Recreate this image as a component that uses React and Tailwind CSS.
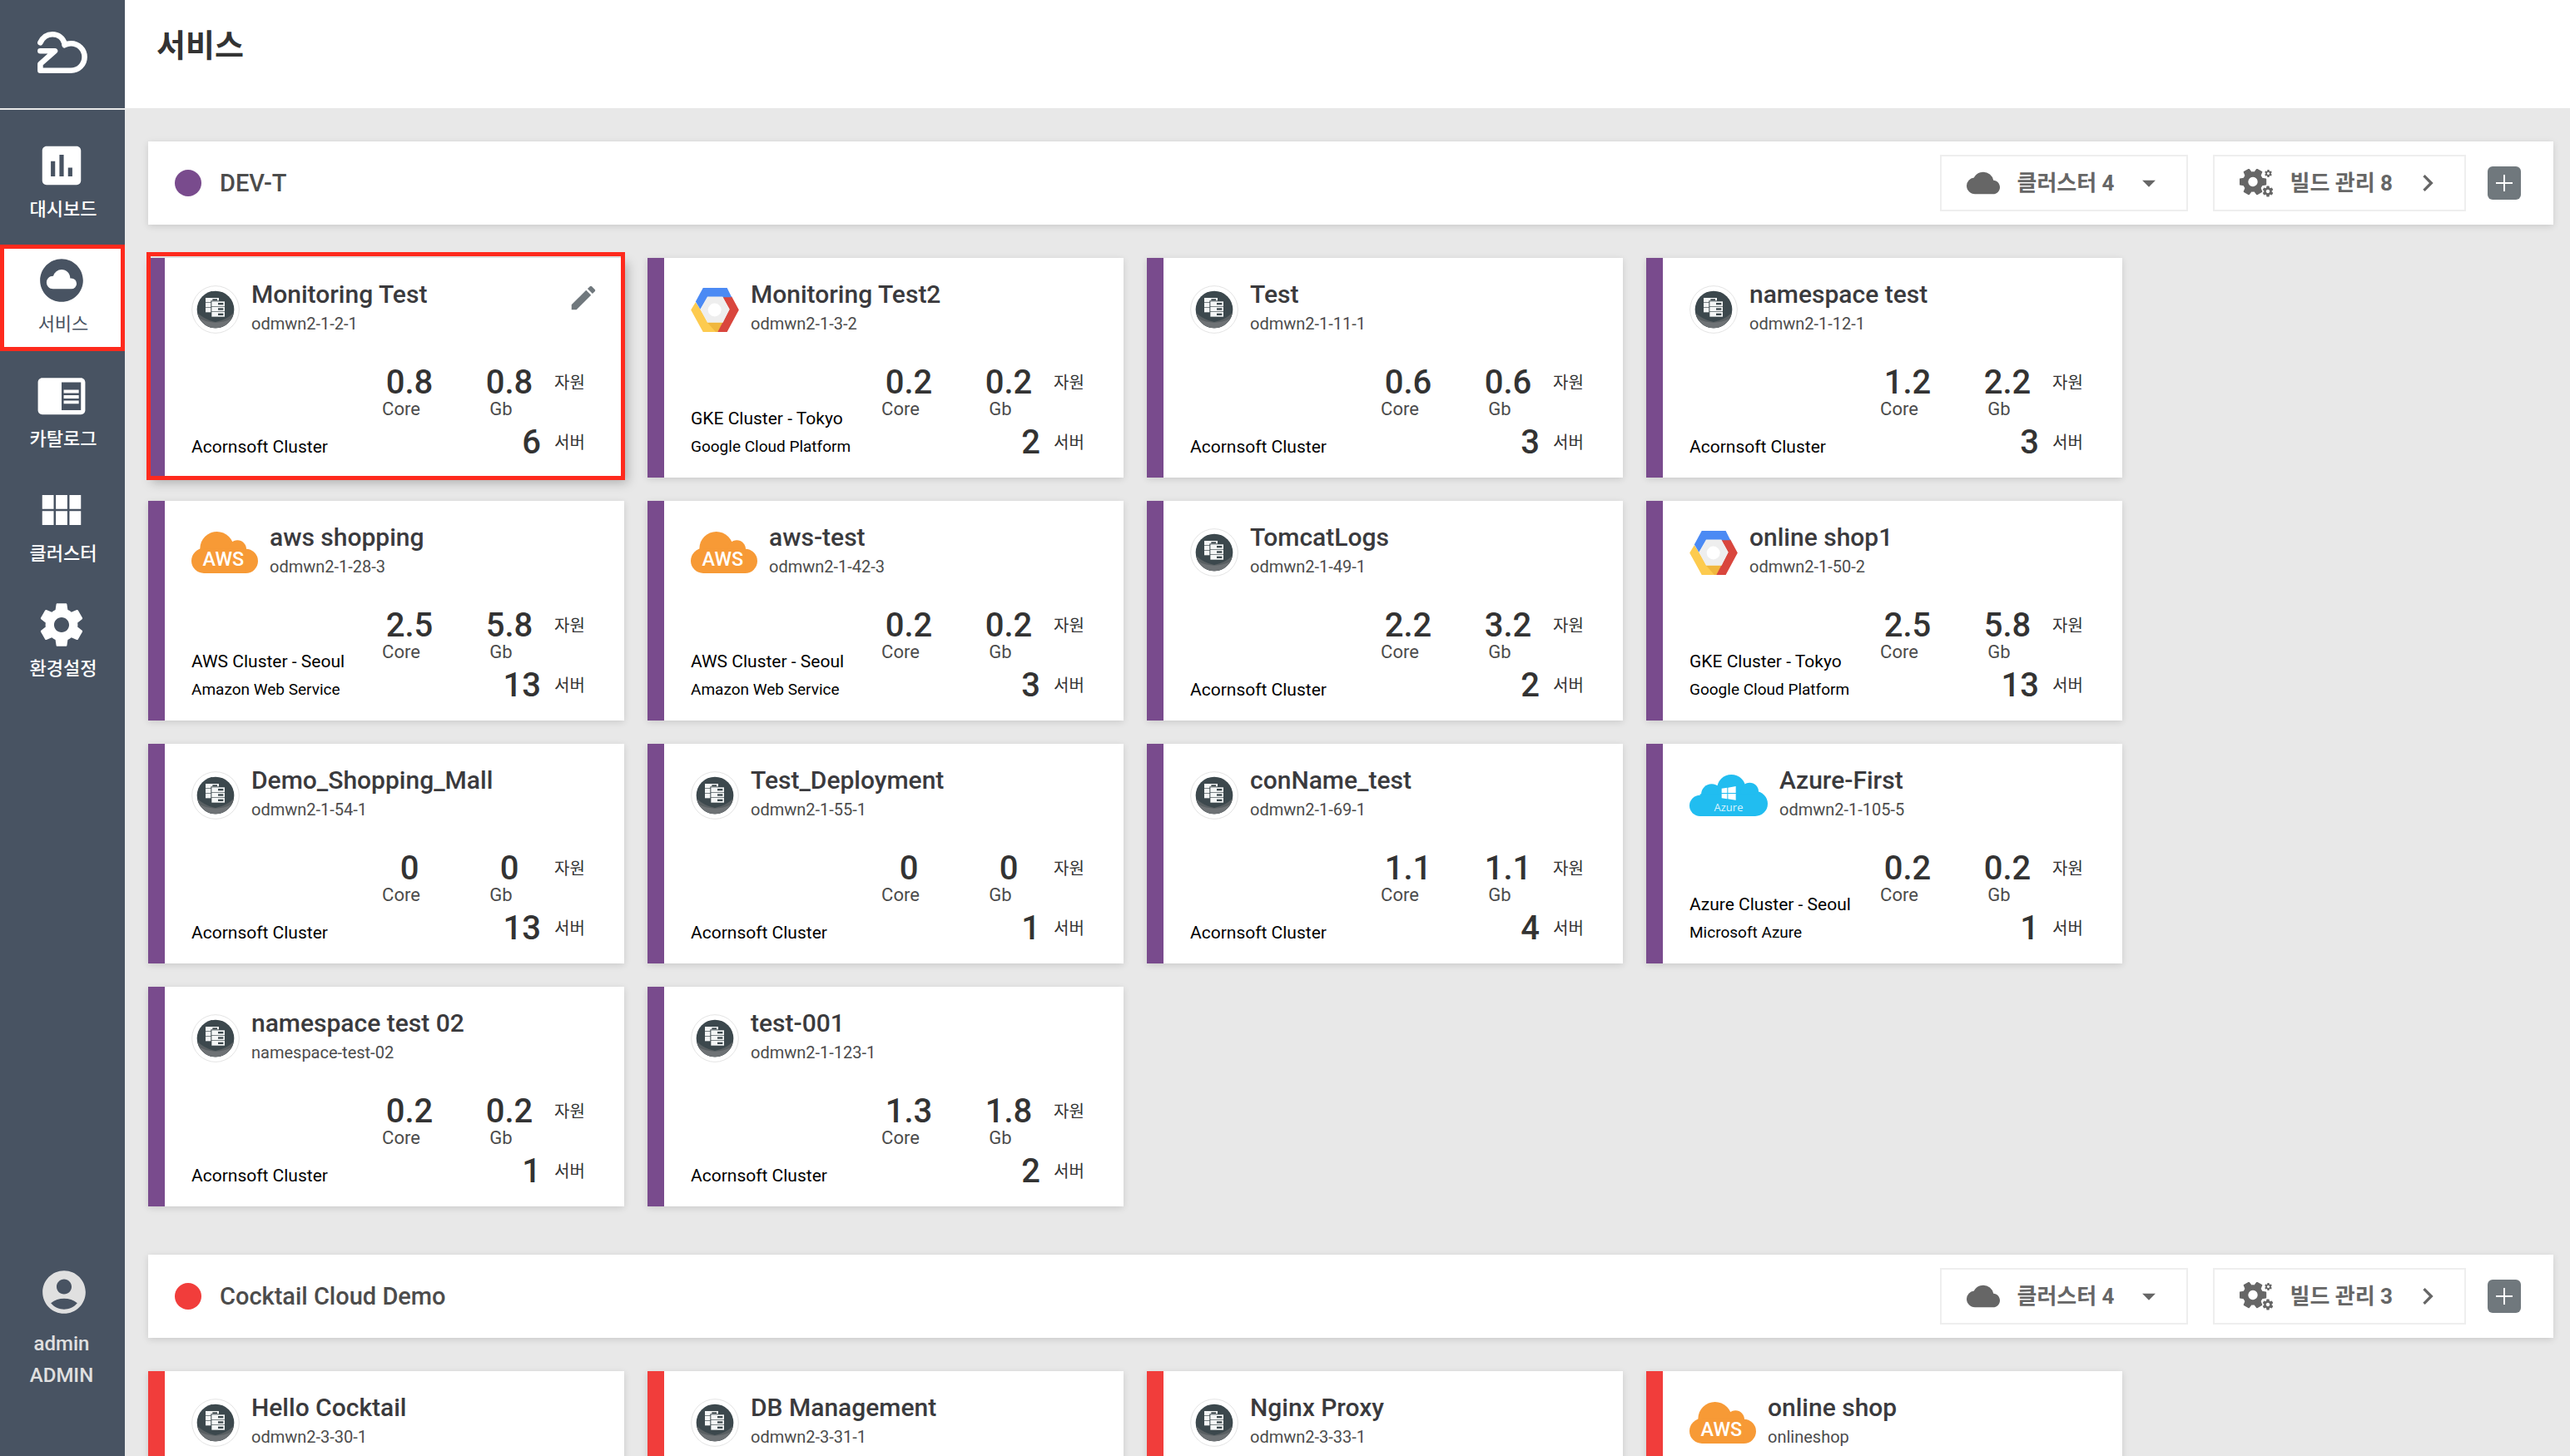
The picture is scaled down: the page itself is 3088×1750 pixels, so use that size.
import React from "react";
import {
  MdInsertChart,
  MdCloudCircle,
  MdChromeReaderMode,
  MdViewModule,
  MdAccountCircle,
  MdCloud,
  MdArrowDropDown,
  MdChevronRight,
  MdEdit,
} from "react-icons/md";

const GEAR =
  "M19.43 12.98c.04-.32.07-.64.07-.98s-.03-.66-.07-.98l2.11-1.65c.19-.15.24-.42.12-.64l-2-3.46c-.12-.22-.39-.3-.61-.22l-2.49 1c-.52-.4-1.08-.73-1.69-.98l-.38-2.65C14.46 2.18 14.25 2 14 2h-4c-.25 0-.46.18-.49.42l-.38 2.65c-.61.25-1.17.59-1.69.98l-2.49-1c-.23-.09-.49 0-.61.22l-2 3.46c-.13.22-.07.49.12.64l2.11 1.65c-.04.32-.07.65-.07.98s.03.66.07.98l-2.11 1.65c-.19.15-.24.42-.12.64l2 3.46c.12.22.39.3.61.22l2.49-1c.52.4 1.08.73 1.69.98l.38 2.65c.03.24.24.42.49.42h4c.25 0 .46-.18.49-.42l.38-2.65c.61-.25 1.17-.59 1.69-.98l2.49 1c.23.09.49 0 .61-.22l2-3.46c.12-.22.07-.49-.12-.64l-2.11-1.65zM12 15.5c-1.93 0-3.5-1.57-3.5-3.5s1.57-3.5 3.5-3.5 3.5 1.57 3.5 3.5-1.57 3.5-3.5 3.5z";

function GearIcon({ className }) {
  return (
    <svg viewBox="0 0 24 24" fill="currentColor" className={className} aria-hidden="true">
      <path d={GEAR} />
    </svg>
  );
}

function GearsIcon({ className }) {
  return (
    <svg viewBox="0 0 40 34" fill="currentColor" className={className} aria-hidden="true">
      <g transform="translate(16 15.5) rotate(30) scale(1.62) translate(-12 -12)">
        <path d={GEAR} />
      </g>
      <g transform="translate(34.5 5.5) scale(0.44) translate(-12 -12)">
        <path d={GEAR} />
      </g>
      <g transform="translate(34 27) scale(0.64) translate(-12 -12)">
        <path d={GEAR} />
      </g>
    </svg>
  );
}

function Logo() {
  return (
    <svg
      viewBox="0 0 60 50"
      className="h-[50px] w-[60px]"
      fill="none"
      stroke="#fff"
      strokeWidth="6.6"
      strokeLinecap="round"
      strokeLinejoin="round"
      aria-hidden="true"
    >
      <path d="M3.4 13.2C6.4 7 11.600 3.300 18 3.300c7 0 12.800 4.300 14.600 11.200" />
      <path d="M32.600 16.200C35 14.900 37.400 14.300 40.200 14.300c9.200 0 16.400 7.200 16.400 16.200s-7.200 16.200-16.400 16.200H3.400v-7.800L21 23.200H3.400" />
    </svg>
  );
}

function ServerLogo() {
  const rows = [0, 1, 2];
  return (
    <svg viewBox="0 0 174 174" className="size-[58px] shrink-0" role="img" aria-label="Server">
      <circle cx="87" cy="87" r="85" fill="#fff" stroke="#e4e4e4" strokeWidth="3" />
      <circle cx="87" cy="87" r="67" fill="#3c484d" />
      <path d="M21 98 Q48 124 87 132 Q126 124 153 98 A67 67 0 0 1 21 98Z" fill="#595f62" />
      <path d="M29 120 Q58 134 87 134 Q116 134 145 120 A67 67 0 0 1 29 120Z" fill="#6e7275" />
      {rows.map((r) => (
        <g key={r} transform={`translate(0 ${r * 18})`}>
          <rect x="51" y="45" width="48" height="16" fill="#f4f6f6" />
          <rect x="76" y="49" width="17" height="5" fill="#3c484d" />
        </g>
      ))}
      <rect x="70" y="55" width="54" height="60" fill="#3c484d" />
      {rows.map((r) => (
        <g key={r} transform={`translate(0 ${r * 19})`}>
          <rect x="73" y="58" width="47" height="17" fill="#f4f6f6" />
          <rect x="96" y="63" width="19" height="7" fill="#3c484d" />
        </g>
      ))}
    </svg>
  );
}

function GcpLogo() {
  return (
    <svg viewBox="0 0 174 160" className="h-[53px] w-[58px] shrink-0" role="img" aria-label="Google Cloud Platform">
      <path d="M17 52 L0 80 L44 160 H98 L119 124 H60 L34 78Z" fill="#fdcb4f" />
      <path d="M60 126 H117 L97 160 H90Z" fill="#f0b73e" />
      <path d="M114 32 H148 L174 80 L131 160 H97 L140 78Z" fill="#d9463d" />
      <path d="M44 0 H131 L148 34 H60 L34 78 L17 50Z" fill="#4b8af4" />
      <path d="M60 32 H115 L140 78 L116 126 H60 L34 78Z" fill="#eeeeee" />
      <circle cx="86" cy="80" r="24" fill="#fff" />
    </svg>
  );
}

function AwsLogo() {
  return (
    <svg viewBox="0 0 240 150" className="h-[50px] w-[80px] shrink-0" role="img" aria-label="AWS">
      <g fill="#f79a36">
        <circle cx="45" cy="105" r="45" />
        <circle cx="92" cy="61" r="61" />
        <circle cx="166" cy="63" r="32" />
        <circle cx="196" cy="106" r="44" />
        <rect x="45" y="62" width="151" height="88" />
      </g>
      <text x="115" y="123" textAnchor="middle" fill="#fff" fontFamily="Roboto, sans-serif" fontWeight="500" fontSize="70">
        AWS
      </text>
    </svg>
  );
}

function AzureLogo() {
  return (
    <svg viewBox="0 0 282 150" className="h-[50px] w-[94px] shrink-0" role="img" aria-label="Azure">
      <g fill="#21bdf0">
        <circle cx="38" cy="112" r="38" />
        <circle cx="80" cy="72" r="38" />
        <circle cx="151" cy="52" r="52" />
        <circle cx="217" cy="61" r="32" />
        <circle cx="237" cy="105" r="45" />
        <rect x="38" y="70" width="199" height="80" />
      </g>
      <g fill="#fff">
        <path d="M116 50 L136 47 V66 H116Z" />
        <path d="M139 47 L167 42 V66 H139Z" />
        <path d="M116 69 H136 V88 L116 85Z" />
        <path d="M139 69 H167 V92 L139 88Z" />
      </g>
      <text x="141" y="131" textAnchor="middle" fill="#d9f3fd" fontFamily="Open Sans, sans-serif" fontSize="39">
        Azure
      </text>
    </svg>
  );
}

const LOGOS = { server: ServerLogo, gcp: GcpLogo, aws: AwsLogo, azure: AzureLogo };

const ACORN = ["Acornsoft Cluster"];
const GKE = ["GKE Cluster - Tokyo", "Google Cloud Platform"];
const AWS = ["AWS Cluster - Seoul", "Amazon Web Service"];
const AZURE = ["Azure Cluster - Seoul", "Microsoft Azure"];

const card = (logo, name, id, cluster, core, gb, servers) => ({ logo, name, id, cluster, core, gb, servers });

const GROUPS = [
  {
    name: "DEV-T",
    dot: "bg-[#794b8d]",
    border: "border-[#794b8d]",
    clusters: 4,
    builds: 8,
    cards: [
      { ...card("server", "Monitoring Test", "odmwn2-1-2-1", ACORN, "0.8", "0.8", "6"), selected: true },
      card("gcp", "Monitoring Test2", "odmwn2-1-3-2", GKE, "0.2", "0.2", "2"),
      card("server", "Test", "odmwn2-1-11-1", ACORN, "0.6", "0.6", "3"),
      card("server", "namespace test", "odmwn2-1-12-1", ACORN, "1.2", "2.2", "3"),
      card("aws", "aws shopping", "odmwn2-1-28-3", AWS, "2.5", "5.8", "13"),
      card("aws", "aws-test", "odmwn2-1-42-3", AWS, "0.2", "0.2", "3"),
      card("server", "TomcatLogs", "odmwn2-1-49-1", ACORN, "2.2", "3.2", "2"),
      card("gcp", "online shop1", "odmwn2-1-50-2", GKE, "2.5", "5.8", "13"),
      card("server", "Demo_Shopping_Mall", "odmwn2-1-54-1", ACORN, "0", "0", "13"),
      card("server", "Test_Deployment", "odmwn2-1-55-1", ACORN, "0", "0", "1"),
      card("server", "conName_test", "odmwn2-1-69-1", ACORN, "1.1", "1.1", "4"),
      card("azure", "Azure-First", "odmwn2-1-105-5", AZURE, "0.2", "0.2", "1"),
      card("server", "namespace test 02", "namespace-test-02", ACORN, "0.2", "0.2", "1"),
      card("server", "test-001", "odmwn2-1-123-1", ACORN, "1.3", "1.8", "2"),
    ],
  },
  {
    name: "Cocktail Cloud Demo",
    dot: "bg-[#f13d3b]",
    border: "border-[#f13d3b]",
    clusters: 4,
    builds: 3,
    cards: [
      card("server", "Hello Cocktail", "odmwn2-3-30-1"),
      card("server", "DB Management", "odmwn2-3-31-1"),
      card("server", "Nginx Proxy", "odmwn2-3-33-1"),
      card("aws", "online shop", "onlineshop"),
    ],
  },
];

const NAV = [
  { label: "대시보드", Icon: MdInsertChart },
  { label: "서비스", Icon: MdCloudCircle, active: true },
  { label: "카탈로그", Icon: MdChromeReaderMode },
  { label: "클러스터", Icon: MdViewModule },
  { label: "환경설정", Icon: GearIcon },
];

function Sidebar() {
  return (
    <aside className="flex w-[150px] shrink-0 flex-col bg-[#485362]">
      <a href="#home" aria-label="Home" className="flex h-[132px] shrink-0 items-center justify-center border-b-2 border-[#e8e8e8] pb-1">
        <Logo />
      </a>
      <nav className="flex flex-col gap-[10px] pt-6">
        {NAV.map(({ label, Icon, active }) => (
          <a
            key={label}
            href={`#${label}`}
            aria-current={active ? "page" : undefined}
            className={
              active
                ? "relative flex h-32 flex-col items-center bg-white pt-3 pr-[2px] text-[#485362]"
                : "flex h-32 flex-col items-center pt-3 pr-[2px] text-white"
            }
          >
            <Icon className="size-[62px]" />
            <span className={active ? "mt-[6px] pl-1 text-[22px] leading-8" : "mt-[6px] pl-1 text-[22px] leading-8 font-medium"}>
              {label}
            </span>
            {active && <span className="pointer-events-none absolute inset-0 border-[5px] border-[#fe2a1d]" />}
          </a>
        ))}
      </nav>
      <div className="mt-auto flex flex-col items-center pr-[2px] pb-[78px] text-[24px] leading-[38px] font-medium text-[#e0e0e0]">
        <MdAccountCircle className="mb-3 ml-[6px] size-[62px]" />
        <span>admin</span>
        <span>ADMIN</span>
      </div>
    </aside>
  );
}

function GroupBar({ group }) {
  return (
    <div className="flex h-[100px] items-center bg-white pr-[39px] pl-8 shadow-[0_2px_8px_rgba(0,0,0,0.13)]">
      <span className={`size-8 rounded-full ${group.dot}`} />
      <h2 className="ml-[22px] text-[29px] leading-10 font-medium text-[#4c4c4c]">{group.name}</h2>
      <div className="ml-auto flex items-center text-[26px] font-bold text-[#666]">
        <label className="flex h-[68px] items-center border-2 border-[#eee] pr-[26px] pl-[30px]">
          <MdCloud className="size-10" />
          <select aria-label="클러스터" className="ml-5 appearance-none bg-transparent font-bold">
            <option>클러스터 {group.clusters}</option>
          </select>
          <MdArrowDropDown className="ml-[22px] size-[38px]" />
        </label>
        <button type="button" className="ml-[30px] flex h-[68px] items-center border-2 border-[#eee] pr-6 pl-[30px]">
          <GearsIcon className="h-[34px] w-10" />
          <span className="ml-5">빌드 관리 {group.builds}</span>
          <MdChevronRight className="ml-[22px] size-10" />
        </button>
        <button type="button" aria-label="추가" className="ml-[26px] flex size-10 items-center justify-center rounded-md bg-[#70787d]">
          <svg viewBox="0 0 20 20" className="size-5" stroke="#fff" strokeWidth="2" aria-hidden="true">
            <path d="M10 0V20M0 10H20" />
          </svg>
        </button>
      </div>
    </div>
  );
}

function Metric({ value, unit }) {
  return (
    <div className="flex w-20 flex-col items-center">
      <span className="pl-5 text-[40px] leading-10 font-medium text-[#333]">{value}</span>
      <span className="text-[22px] leading-6 text-[#4c4c4c]">{unit}</span>
    </div>
  );
}

function ServiceCard({ item, border }) {
  const Mark = LOGOS[item.logo];
  return (
    <article
      className={`relative flex min-h-[264px] w-[572px] flex-col border-l-[20px] bg-white pt-6 pl-8 ${border} ${
        item.selected ? "shadow-[4px_6px_12px_rgba(0,0,0,0.25)]" : "shadow-[0_2px_8px_rgba(0,0,0,0.13)]"
      }`}
    >
      <header className="flex h-[70px] items-center">
        <div className="mt-[6px] mr-[14px]">
          <Mark />
        </div>
        <div>
          <h3 className="text-[30px] leading-10 font-medium text-[#3a3a3d]">{item.name}</h3>
          <p className="text-[20px] leading-[30px] text-[#4c4c4c]">{item.id}</p>
        </div>
        {item.selected && (
          <button type="button" aria-label="편집" className="mr-[30px] mb-[22px] ml-auto text-[#70787d]">
            <MdEdit className="size-[38px]" />
          </button>
        )}
      </header>
      {item.cluster && (
        <div className="flex flex-1 items-end justify-between">
          <div className="pb-5 leading-[34px] whitespace-nowrap text-black">
            <p className="text-[21px]">{item.cluster[0]}</p>
            {item.cluster[1] && <p className="text-[19px]">{item.cluster[1]}</p>}
          </div>
          <div className="pb-[22px]">
            <div className="flex gap-10">
              <Metric value={item.core} unit="Core" />
              <div className="flex gap-6">
                <Metric value={item.gb} unit="Gb" />
                <span className="w-[84px] text-[20px] leading-10 text-[#333]">자원</span>
              </div>
            </div>
            <div className="mt-2 flex justify-end gap-4 leading-10 text-[#333]">
              <span className="text-[40px] leading-10 font-medium">{item.servers}</span>
              <span className="w-[84px] text-[20px]">서버</span>
            </div>
          </div>
        </div>
      )}
      {item.selected && (
        <span className="pointer-events-none absolute -top-[7px] -right-px -bottom-[3px] -left-[22px] border-[5px] border-[#fe2a1d]" />
      )}
    </article>
  );
}

export default function App() {
  return (
    <div className="flex h-screen overflow-hidden bg-[#e8e8e8] font-['Roboto','Noto_Sans_CJK_KR',sans-serif]">
      <Sidebar />
      <div className="flex min-w-0 flex-1 flex-col">
        <header className="h-[130px] shrink-0 bg-white px-[38px] pt-[25px]">
          <h1 className="text-[38px] leading-[60px] font-bold text-[#333]">서비스</h1>
        </header>
        <main className="flex flex-1 flex-col gap-[58px] overflow-y-auto pt-10 pr-5 pl-7 [scrollbar-width:none]">
          {GROUPS.map((group) => (
            <section key={group.name} className="flex flex-col gap-10">
              <GroupBar group={group} />
              <div className="flex flex-wrap gap-7">
                {group.cards.map((item) => (
                  <ServiceCard key={item.id} item={item} border={group.border} />
                ))}
              </div>
            </section>
          ))}
        </main>
      </div>
    </div>
  );
}
